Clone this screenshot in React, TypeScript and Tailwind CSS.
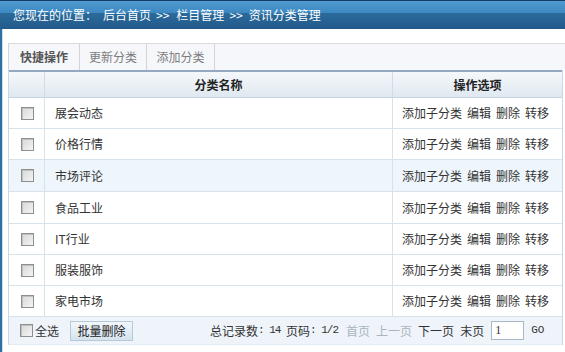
import React from "react";

const rows = [
  { name: "展会动态", h: "h-[31px]" },
  { name: "价格行情", h: "h-[31px]" },
  { name: "市场评论", h: "h-[32px]", hl: true },
  { name: "食品工业", h: "h-[32px]" },
  { name: "IT行业", h: "h-[31px]" },
  { name: "服装服饰", h: "h-[31px]" },
  { name: "家电市场", h: "h-[31px]" },
];

function Box() {
  return (
    <span className="inline-block w-[13px] h-[13px] border border-[#8e8f8f] bg-[linear-gradient(135deg,#d8d8d8,#f4f4f4)] shadow-[inset_1px_1px_0_#c0c0c0]" />
  );
}

const mono = { fontFamily: "'Liberation Mono', monospace" };

export default function App() {
  return (
    <div
      className="w-[565px] h-[352px] bg-white overflow-hidden text-[12px] text-[#333] flex flex-col"
      style={{ fontFamily: "'Noto Sans CJK SC', 'DejaVu Sans', sans-serif" }}
    >
      {/* header */}
      <div className="h-[29px] shrink-0 flex items-center border-t border-[#123f63] bg-[linear-gradient(#4f9bd2,#3d88c0_42%,#2a6b9c_44%,#22598a)] text-white pl-[13px]">
        <span>您现在的位置：</span>
        <span className="ml-[6px]">后台首页</span>
        <span className="ml-[5px] mr-[7px]">&gt;&gt;</span>
        <span>栏目管理</span>
        <span className="ml-[5px] mr-[6px]">&gt;&gt;</span>
        <span>资讯分类管理</span>
      </div>

      <div className="flex flex-1">
        <div className="w-[2px] bg-[#2c6fa1]" />
        <div className="w-[1px] bg-[#cfdde8]" />
        <div className="w-[5px]" />
        <div className="flex-1 flex flex-col pt-[14px]">
          {/* tabs */}
          <div className="h-[27px] flex bg-[#f6f7fb] border-t border-[#dcdcdc]">
            <div className="w-[72px] flex items-center justify-center font-bold text-[#555] border-r border-l border-[#d4d4d4]">快捷操作</div>
            <div className="w-[67px] flex items-center justify-center text-[#7c7c7c] border-r border-[#d4d4d4]">更新分类</div>
            <div className="w-[68px] flex items-center justify-center text-[#7c7c7c] border-r border-[#d4d4d4]">添加分类</div>
          </div>

          {/* table */}
          <div className="w-[555px] border-l border-r border-[#c8d8e6]">
            <div className="h-[28px] flex border-t-2 border-[#92a9bf] border-b border-b-[#c6d4df] bg-[linear-gradient(#f5f8fb,#dfe8f0)] font-bold text-[#222]">
              <div className="w-[36px] border-r border-[#d0dce6]" />
              <div className="w-[348px] flex items-center justify-center border-r border-[#d0dce6]">分类名称</div>
              <div className="flex-1 flex items-center justify-center">操作选项</div>
            </div>
            {rows.map((r) => (
              <div
                key={r.name}
                className={`${r.h} flex border-b border-[#d6e2ec] ${r.hl ? "bg-[#eef5fb]" : "bg-white"}`}
              >
                <div className="w-[36px] flex items-center justify-center border-r border-[#d6e2ec] pl-[1px]">
                  <Box />
                </div>
                <div className="w-[348px] flex items-center pl-[10px] border-r border-[#d6e2ec]">{r.name}</div>
                <div className="flex-1 flex items-center pl-[9px] gap-[5px]">
                  <span>添加子分类</span>
                  <span>编辑</span>
                  <span>删除</span>
                  <span>转移</span>
                </div>
              </div>
            ))}
            <div className="h-[28px] flex items-center bg-[#eef4fa] border-b border-[#e3ecf3]">
              <div className="ml-[11px] flex items-center">
                <Box />
                <span className="ml-[2px]">全选</span>
              </div>
              <div className="ml-[11px] h-[20px] w-[63px] flex items-center justify-center border border-[#b7c9d8] bg-[linear-gradient(#f2f7fb,#d5e3ee)] text-[#222]">批量删除</div>
              <div className="ml-[77px] flex items-center whitespace-pre">
                <span>总记录数</span>
                <span className="text-[11px] tracking-[-1px]" style={mono}>: 14 </span>
                <span>页码</span>
                <span className="text-[11px] tracking-[-1px]" style={mono}>: 1/2</span>
                <span className="ml-[8px] text-[#aab4bd]">首页</span>
                <span className="ml-[6px] text-[#aab4bd]">上一页</span>
                <span className="ml-[6px]">下一页</span>
                <span className="ml-[6px]">末页</span>
                <div className="ml-[7px] w-[33px] h-[19px] border border-[#a9b8c4] bg-white pl-[3px] leading-[17px]" style={{ fontFamily: "'Liberation Serif', serif" }}>1</div>
                <span className="ml-[7px] text-[11px]" style={mono}>GO</span>
              </div>
            </div>
          </div>
        </div>
      </div>
    </div>
  );
}
